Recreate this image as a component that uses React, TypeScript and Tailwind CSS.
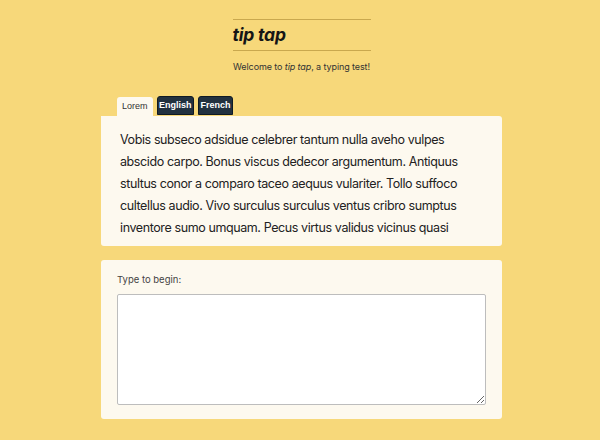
import { useState } from "react";

const texts: Record<string, string[]> = {
  Lorem: [
    "Vobis subseco adsidue celebrer tantum nulla aveho vulpes",
    "abscido carpo. Bonus viscus dedecor argumentum. Antiquus",
    "stultus conor a comparo taceo aequus vulariter. Tollo suffoco",
    "cultellus audio. Vivo surculus surculus ventus cribro sumptus",
    "inventore sumo umquam. Pecus virtus validus vicinus quasi",
  ],
  English: [
    "The quick brown fox jumps over the lazy dog while the",
    "early bird catches the worm.",
  ],
  French: [
    "Le vif renard brun saute par-dessus le chien paresseux",
    "pendant que l'oiseau chante.",
  ],
};

const tabs = ["Lorem", "English", "French"];

export default function App() {
  const [active, setActive] = useState("Lorem");
  const [typed, setTyped] = useState("");

  return (
    <div className="min-h-[440px] bg-[#f7d87a] pl-[3px] font-['Inter',sans-serif] text-[#1f1f1f]">
      <header className="flex flex-col items-center pt-[19px]">
        <div className="w-[138px] border-y border-[#c9a84e]">
          <h1 className="py-[3px] text-[17.5px] font-bold italic leading-[24px] tracking-[-0.2px] text-[#151515]">
            tip tap
          </h1>
        </div>
        <p className="mt-[10px] text-[9px] leading-[12px] tracking-[-0.1px] text-[#333]">
          Welcome to <em>tip tap</em>, a typing test!
        </p>
      </header>

      <main className="mx-auto mt-[23px] w-[401px]">
        <div className="flex gap-[4px] pl-[16px] font-['Liberation_Sans',Arial,sans-serif]">
          {tabs.map((t) =>
            t === active ? (
              <button
                key={t}
                onClick={() => setActive(t)}
                className="mt-[1px] h-[19px] rounded-t-[3px] bg-[#fdf9ef] px-[5px] text-[9px] leading-[19px] text-[#333]"
              >
                {t}
              </button>
            ) : (
              <button
                key={t}
                onClick={() => setActive(t)}
                className="h-[19px] rounded-t-[3px] border border-[#0f1a24] bg-[#22313f] px-[1.5px] text-[9px] font-bold leading-[17px] text-white"
              >
                {t}
              </button>
            )
          )}
        </div>

        <section className="h-[130px] overflow-hidden rounded-b-[3px] rounded-tr-[3px] bg-[#fdf9ef] px-[19px] pt-[13px]">
          <p className="text-[12.5px] leading-[22px] tracking-[-0.4px] text-[#222]">
            {texts[active].map((line) => (
              <span key={line} className="block whitespace-nowrap">
                {line}
              </span>
            ))}
          </p>
        </section>

        <section className="mt-[14px] rounded-[3px] bg-[#fdf9ef] px-[16px] pb-[14px] pt-[13px]">
          <label className="block text-[9.5px] leading-[14px] text-[#444]">Type to begin:</label>
          <textarea
            value={typed}
            onChange={(e) => setTyped(e.target.value)}
            className="mt-[7px] block h-[111px] w-full resize-y rounded-[2px] border border-[#bdbdbd] bg-white outline-none"
          />
        </section>
      </main>
    </div>
  );
}
